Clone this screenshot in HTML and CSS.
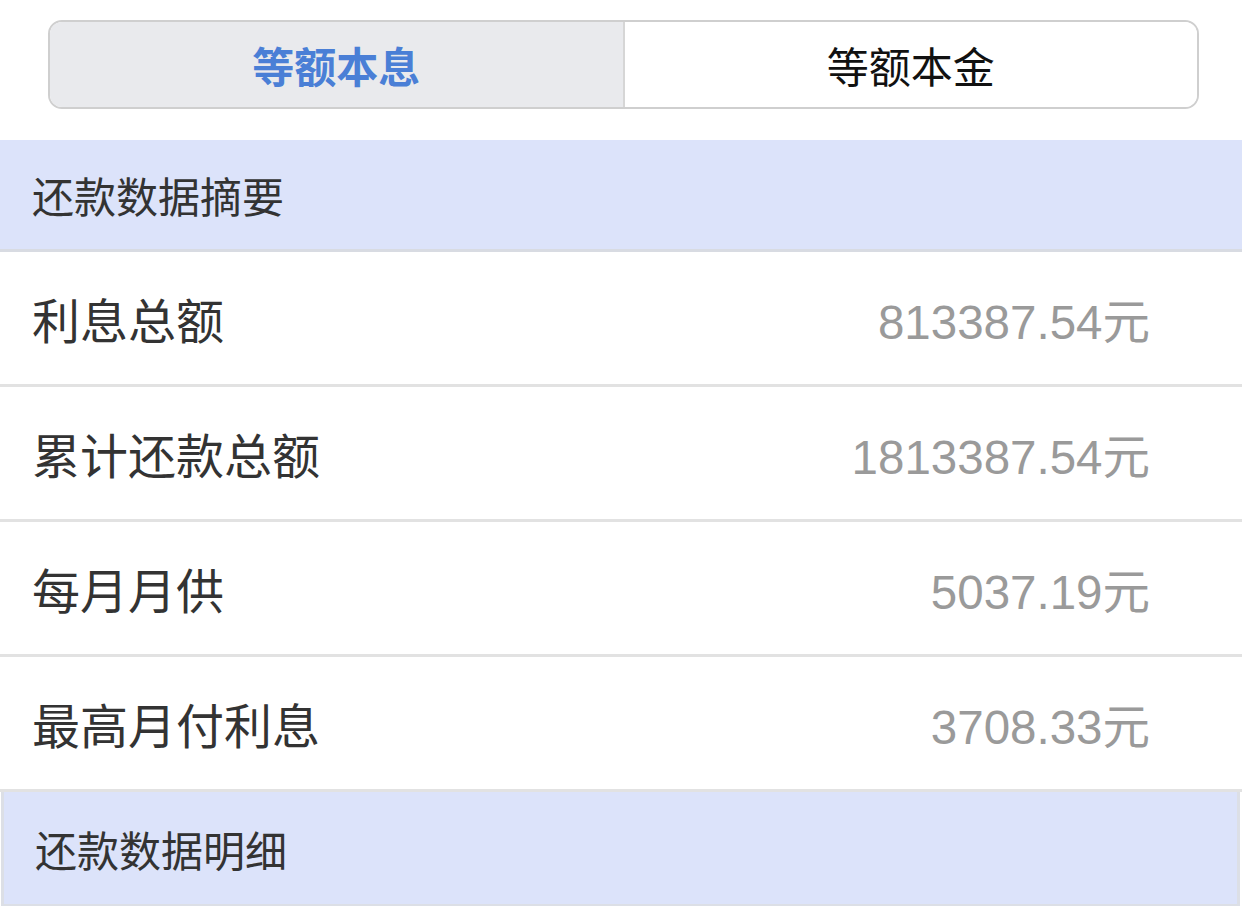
FILE: index.html
```html
<!DOCTYPE html>
<html lang="zh-CN">
<head>
    <meta charset="utf-8">
    <link rel="stylesheet" href="styles.css">
    <title>房贷计算结果</title>
</head>
<body>
    <div class="page">
        <div class="tabs">
            <div class="tab active">等额本息</div>
            <div class="tab">等额本金</div>
        </div>

        <div class="section-title">还款数据摘要</div>
        <div class="row">
            <span class="label">利息总额</span>
            <span class="value">813387.54元</span>
        </div>
        <div class="row">
            <span class="label">累计还款总额</span>
            <span class="value">1813387.54元</span>
        </div>
        <div class="row">
            <span class="label">每月月供</span>
            <span class="value">5037.19元</span>
        </div>
        <div class="row">
            <span class="label">最高月付利息</span>
            <span class="value">3708.33元</span>
        </div>

        <div class="section-title detail">还款数据明细</div>
    </div>
</body>
</html>
```

FILE: styles.css
```css
* {
    margin: 0;
    padding: 0;
    box-sizing: border-box;
}
body {
    font-family: "Liberation Sans", "Noto Sans CJK SC", sans-serif;
    background: #fff;
    color: #333;
}
.page {
    width: 1242px;
}
.tabs {
    display: flex;
    margin: 20px 43px 0 48px;
    height: 89px;
    border: 2px solid #cfcfcf;
    border-radius: 14px;
    overflow: hidden;
}
.tab {
    flex: 1;
    display: flex;
    align-items: center;
    justify-content: center;
    font-size: 42px;
    color: #111;
    background: #fff;
}
.tab.active {
    color: #4a7fd6;
    font-weight: bold;
    background: #e9eaed;
    border-right: 2px solid #d6d6d6;
}
.section-title {
    margin-top: 31px;
    height: 112px;
    padding-left: 32px;
    display: flex;
    align-items: center;
    font-size: 42px;
    color: #333;
    background: #dce3fa;
    border-bottom: 3px solid #d8dbe2;
}
.row {
    height: 135px;
    padding: 0 92px 0 32px;
    display: flex;
    align-items: center;
    justify-content: space-between;
    border-bottom: 3px solid #e2e2e2;
}
.label {
    font-size: 48px;
    color: #333;
}
.value {
    font-size: 47.5px;
    color: #9a9a9a;
}
.section-title.detail {
    margin: 0 2px 0 1px;
    height: 115px;
    padding-left: 31px;
    border: 3px solid #dcdfe6;
    border-top: 0;
}
```
